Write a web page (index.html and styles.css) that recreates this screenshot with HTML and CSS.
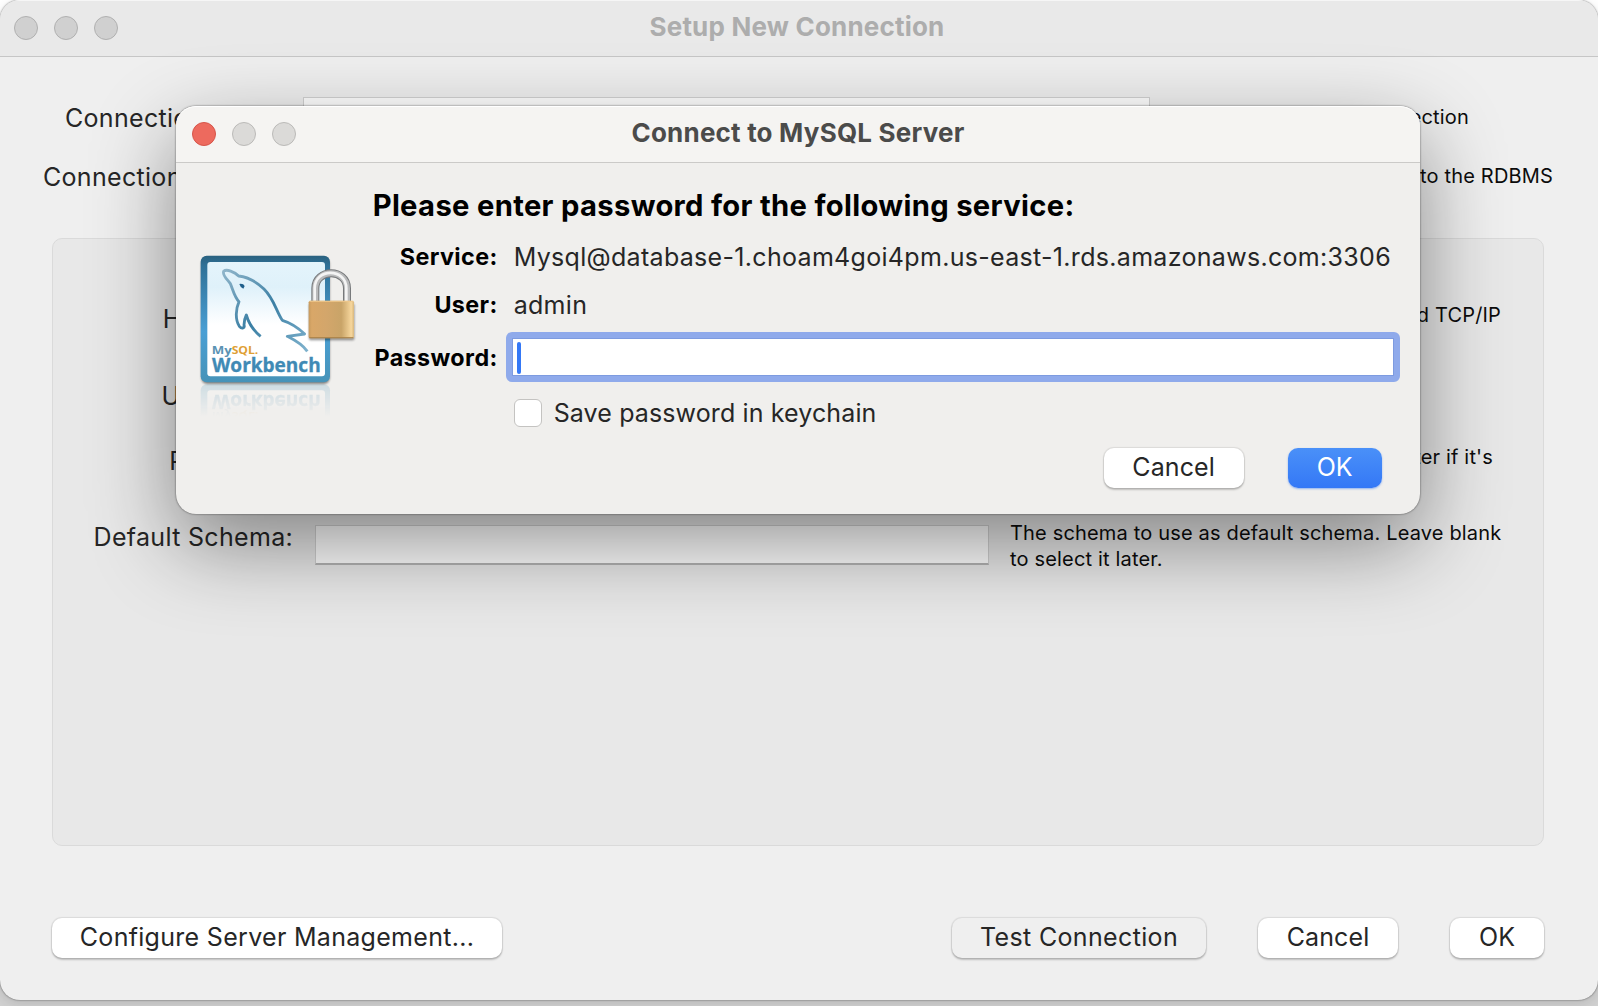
FILE: index.html
```
<!DOCTYPE html>
<html lang="en">
<head>
<meta charset="utf-8">
<title>Setup New Connection</title>
<link rel="stylesheet" href="styles.css">
</head>
<body>
<main class="window">
  <header class="titlebar">
    <div class="lights"><i></i><i></i><i></i></div>
    <h1 class="title">Setup New Connection</h1>
  </header>
  <section class="connection">
    <div class="row">
      <label class="name">Connection</label>
      <div class="field"></div>
      <p class="hint short">connection</p>
    </div>
    <div class="row">
      <label class="method">Connection</label>
      <div></div>
      <p class="hint">to the RDBMS</p>
    </div>
  </section>
  <section class="group">
    <div class="param host"><label>Hostname:</label><p class="hint">and TCP/IP</p></div>
    <div class="param user"><label>Username:</label></div>
    <div class="param pass"><label>Password:</label><p class="hint">later if it's</p></div>
    <div class="param"><label>Default Schema:</label><div class="field"></div><p class="hint">The schema to use as default schema. Leave blank<br>to select it later.</p></div>
  </section>
  <footer class="actions">
    <button class="btn configure">Configure Server Management...</button>
    <button class="btn test">Test Connection</button>
    <button class="btn cancel">Cancel</button>
    <button class="btn ok">OK</button>
  </footer>
</main>

<div class="dialog" role="dialog">
  <header class="titlebar">
    <div class="lights"><i class="close"></i><i></i><i></i></div>
    <h2 class="title">Connect to MySQL Server</h2>
  </header>
  <div class="dialog-body">
    <svg class="logo" viewBox="60 70 470 500">
      <defs>
        <linearGradient id="frame" x1="0" y1="0" x2="0" y2="1"><stop offset="0" stop-color="#2a617f"/><stop offset=".08" stop-color="#2f7197"/><stop offset=".6" stop-color="#4a9fd4"/><stop offset="1" stop-color="#4693b8"/></linearGradient>
        <linearGradient id="sky" x1="0" y1="0" x2="0" y2="1"><stop offset="0" stop-color="#e4f4fb"/><stop offset=".22" stop-color="#dff1fa"/><stop offset=".55" stop-color="#fff"/></linearGradient>
        <linearGradient id="skin" x1="0" y1="0" x2="1" y2="1"><stop offset="0" stop-color="#8fb5ca"/><stop offset=".5" stop-color="#3b7fa4"/><stop offset="1" stop-color="#7fb2cd"/></linearGradient>
        <linearGradient id="brass" x1="0" y1="0" x2="1" y2="0"><stop offset="0" stop-color="#c69a5e"/><stop offset=".07" stop-color="#d9a768"/><stop offset=".4" stop-color="#d3a66b"/><stop offset=".72" stop-color="#c9a468"/><stop offset=".94" stop-color="#f6d69c"/><stop offset="1" stop-color="#d9b77c"/></linearGradient>
        <linearGradient id="fade" x1="0" y1="0" x2="0" y2="1"><stop offset="0" stop-color="#fff" stop-opacity=".2"/><stop offset="1" stop-color="#fff" stop-opacity="0"/></linearGradient>
        <mask id="mirror"><rect x="50" y="462" width="480" height="100" fill="url(#fade)"/></mask>
        <filter id="soft" x="-10%" y="-10%" width="120%" height="120%"><feGaussianBlur stdDeviation="3"/></filter>
      </defs>
      <rect x="64" y="84" width="385" height="379" rx="18" fill="#000" opacity=".45" filter="url(#soft)"/>
      <g id="badge">
        <rect x="62" y="78" width="388" height="380" rx="18" fill="url(#frame)"/>
        <rect x="82" y="97" width="353" height="343" rx="9" fill="url(#sky)"/>
        <text x="95" y="374" class="logo-my" textLength="60" lengthAdjust="spacingAndGlyphs">My</text>
        <text x="155" y="374" class="logo-sql" textLength="80" lengthAdjust="spacingAndGlyphs">SQL.</text>
        <text x="96" y="426" class="logo-wb" textLength="326" lengthAdjust="spacingAndGlyphs">Workbench</text>
      </g>
      <path d="M382 365C370 348 346 332 322 320L374 313C352 292 330 279 307 272C288 243 282 208 252 178C228 155 202 142 176 139C164 126 139 117 131 125C126 137 142 149 151 162C159 180 163 202 177 216C167 238 165 270 178 290C186 299 195 295 192 286C192 274 195 264 199 256C207 284 221 303 242 320" fill="none" stroke="url(#skin)" stroke-width="8.5" stroke-linejoin="round"/>
      <path d="M178 163q12-2 16 6l-4 8q-9-3-12-14z" fill="#1f5f8b"/>
      <g mask="url(#mirror)"><use href="#badge" transform="translate(0 922) scale(1 -1)"/></g>
      <rect x="387" y="222" width="136" height="110" rx="5" fill="#000" opacity=".4" filter="url(#soft)"/>
      <path d="M406 216V176C406 116 501 116 501 176V216" fill="none" stroke="#77797b" stroke-width="24"/>
      <path d="M406 216V176C406 116 501 116 501 176V216" fill="none" stroke="#b9babb" stroke-width="18"/>
      <path d="M404 216V176C404 114 499 114 499 176V216" fill="none" stroke="#f4f4f4" stroke-width="8"/>
      <rect x="386" y="213" width="136" height="113" rx="5" fill="url(#brass)"/>
      <path d="M388 215h132" stroke="#eec78c" stroke-width="3"/>
      <path d="M388 324h132" stroke="#a87f48" stroke-width="3"/>
    </svg>
    <div class="login">
      <h3 class="heading">Please enter password for the following service:</h3>
      <div class="entry service"><b>Service:</b><p>Mysql@database-1.choam4goi4pm.us-east-1.rds.amazonaws.com:3306</p></div>
      <div class="entry admin"><b>User:</b><p>admin</p></div>
      <div class="entry password"><b>Password:</b><div class="input"><i class="caret"></i></div></div>
      <div class="save"><i class="checkbox"></i><p>Save password in keychain</p></div>
      <div class="buttons">
        <button class="btn cancel">Cancel</button>
        <button class="btn primary">OK</button>
      </div>
    </div>
  </div>
</div>
</body>
</html>
```
FILE: styles.css
```
* { box-sizing: border-box; margin: 0; padding: 0; }
html { background: #d4d4d4; }
body {
  width: 1598px;
  height: 1006px;
  overflow: hidden;
  background: linear-gradient(#fff 0 40px, #d2d2d2 100px);
  font: 25px/32px Inter, "Liberation Sans", sans-serif;
  letter-spacing: .31px;
  color: #262626;
  white-space: nowrap;
}
.window {
  width: 1598px;
  height: 1000px;
  display: flex;
  flex-direction: column;
  background: #efefef;
  border-radius: 20px;
  box-shadow: 0 0 2px rgba(0, 0, 0, .6), 0 4px 14px rgba(0, 0, 0, .12);
  overflow: hidden;
}
.titlebar {
  height: 57px;
  flex: none;
  display: grid;
  grid-template-columns: 1fr auto 1fr;
  align-items: center;
  padding: 0 18px 0 14px;
  background: #e9e9e9;
  border-bottom: 1px solid #c6c6c6;
  border-top: 1px solid #f6f6f6;
}
.lights { display: flex; gap: 16px; margin-top: -1px; }
.lights i { width: 24px; height: 24px; border-radius: 50%; background: #d0d0d0; border: 1px solid #b0b0b0; }
.title { font-size: 26px; line-height: 32px; font-weight: 700; letter-spacing: .2px; color: #adadad; margin-top: -3px; }
.connection { padding-top: 40px; display: flex; flex-direction: column; gap: 19px; }
.row { display: grid; grid-template-columns: 293px 847px 1fr; column-gap: 10px; align-items: center; height: 40px; }
label { text-align: right; padding-top: 1px; }
.row label { text-align: left; padding-top: 2px; }
.name { padding-left: 65px; }
.method { padding-left: 43px; }
.field { height: 40px; background: #fff; border: 1px solid #d2d2d2; border-bottom: 2px solid #b4b4b4; }
.hint { font-size: 20px; line-height: 26px; letter-spacing: .17px; color: #0c0c0c; }
.row .hint { text-align: right; padding-right: 45px; }
.row .short { padding-right: 129px; }
.group {
  margin: 42px 54px 0 52px;
  height: 608px;
  flex: none;
  background: #e8e8e8;
  border: 1px solid #dadada;
  border-radius: 10px;
  padding-top: 59px;
}
.param { display: grid; grid-template-columns: 240px 673px 1fr; column-gap: 23px; height: 76px; padding-top: 4px; }
.param .field { margin: 5px 0 0 -1px; }
.param .hint { grid-column: 3; margin-left: -2px; }
.host { height: 77px; }
.user { height: 65px; }
.host .hint { text-align: right; padding-right: 42px; }
.pass .hint { text-align: right; padding-right: 50px; }
.pass label { margin-right: -2px; }
.actions { display: flex; padding: 72px 54px 0 52px; }
.btn {
  height: 40px;
  border: 0;
  border-radius: 10px;
  background: #fff;
  color: #262626;
  font: 25px/38px Inter, "Liberation Sans", sans-serif;
  padding-bottom: 2px;
  white-space: nowrap;
  box-shadow: 0 0 1px 1px rgba(0, 0, 0, .09), 0 2px 2px rgba(0, 0, 0, .2);
}
.configure { width: 450px; letter-spacing: .3px; }
.test { width: 254px; margin-left: auto; background: #efefef; letter-spacing: .35px; }
.cancel { width: 140px; letter-spacing: .1px; }
.ok { width: 94px; }
.actions .cancel, .actions .ok { margin-left: 52px; }

.dialog {
  position: absolute;
  left: 176px;
  top: 106px;
  width: 1244px;
  height: 408px;
  display: flex;
  flex-direction: column;
  background: #f0efed;
  border-radius: 20px;
  box-shadow: 0 0 2px rgba(0, 0, 0, .65), 0 30px 84px rgba(0, 0, 0, .44);
}
.dialog .titlebar { background: #f5f4f2; border-bottom-color: #cbcac8; border-top-color: #fff; border-radius: 20px 20px 0 0; padding: 0 16px; }
.dialog .lights i { background: #dbdad8; border-color: #bbbab8; }
.dialog .lights .close { background: #ed6a5e; border-color: #d6554a; }
.dialog .title { color: #4b4b4a; }
.dialog-body { flex: 1; display: flex; }
.logo { width: 156.67px; height: 166.67px; margin: 90px 0 0 24px; flex: none; overflow: visible; }
.logo text { font-family: "Open Sans", sans-serif; font-weight: 700; letter-spacing: 0; }
.logo-my { font-size: 32px; fill: #5b93b3; }
.logo-sql { font-size: 32px; fill: #dfa035; }
.logo-wb { font-size: 58px; fill: #3f8ab5; stroke: #3f8ab5; stroke-width: 1px; }
.login { flex: 1; padding: 25px 0 0 16px; }
.heading { font-size: 29.2px; line-height: 36px; letter-spacing: .32px; color: #000; }
.entry { display: grid; grid-template-columns: 125px 1fr; column-gap: 16px; height: 48px; align-items: start; }
.entry b { justify-self: end; font-size: 23.3px; letter-spacing: .4px; color: #000; }
.service { margin-top: 17px; }
.password { margin-top: 5px; }
.input { display: flex; width: 894px; height: 50px; margin: -10px 0 0 -8px; background: #fff; border: 6px solid #8faaeb; border-radius: 6px; padding: 4px 5px; box-shadow: inset 0 0 0 1px #7d9be0; }
.caret { width: 4px; height: 32px; border-radius: 2px; background: #3478f6; }
.save { display: flex; gap: 12px; padding-left: 141px; align-items: center; margin-top: 7px; letter-spacing: .12px; }
.checkbox { width: 28px; height: 28px; border-radius: 6px; background: #fff; border: 1px solid #c4c3c1; }
.buttons { display: flex; gap: 44px; padding-left: 731px; margin-top: 19px; }
.primary { width: 94px; color: #fff; background: linear-gradient(#4a90f8, #3478f6); box-shadow: 0 1px 2px rgba(52, 120, 246, .5); }
```
